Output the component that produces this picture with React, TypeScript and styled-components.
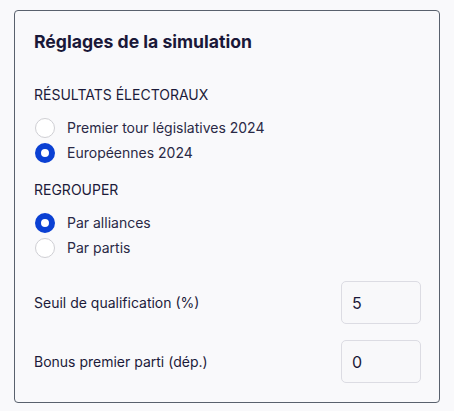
import React, { useState } from "react";
import styled, { createGlobalStyle } from "styled-components";

const Global = createGlobalStyle`
  html, body { margin: 0; padding: 0; background: #f9f9fb; }
  body { font-family: Inter, "Noto Sans", sans-serif; color: #1c1b3a; }
  * { box-sizing: border-box; }
`;

const Page = styled.div`
  padding: 10px 14px;
`;

const Card = styled.section`
  width: 426px;
  border: 1px solid #59616d;
  border-radius: 4px;
  background: #f9f9fb;
  padding: 19px 18px 19px 19px;
  display: flex;
  flex-direction: column;
`;

const Title = styled.h2`
  margin: 0;
  font-size: 17.6px;
  line-height: 24px;
  font-weight: 700;
  color: #1a1838;
`;

const SectionLabel = styled.div<{ $top: number }>`
  margin-top: ${(p) => p.$top}px;
  font-size: 14px;
  line-height: 20px;
  text-transform: uppercase;
  color: #1c1b3a;
`;

const RadioGroup = styled.div`
  margin-top: 10px;
  display: flex;
  flex-direction: column;
`;

const RadioRow = styled.label`
  height: 25px;
  display: flex;
  align-items: center;
  gap: 12px;
  padding-left: 1px;
  font-size: 14px;
  color: #2a2946;
  cursor: pointer;
`;

const RadioDot = styled.span<{ $checked: boolean }>`
  width: 20px;
  height: 20px;
  border-radius: 50%;
  background: #ffffff;
  border: ${(p) => (p.$checked ? "6px solid #0b40d3" : "1px solid #cfcfd4")};
  flex-shrink: 0;
`;

const Field = styled.div<{ $top: number }>`
  margin-top: ${(p) => p.$top}px;
  display: flex;
  align-items: center;
  justify-content: space-between;
  height: 43px;
`;

const FieldLabel = styled.span`
  font-size: 14px;
  color: #1c1b3a;
`;

const NumberBox = styled.input`
  width: 80px;
  height: 43px;
  border: 1px solid #dcdce3;
  border-radius: 5px;
  background: #f8f8fa;
  padding: 0 10px;
  font-family: Inter, "Noto Sans", sans-serif;
  font-size: 16px;
  color: #1a1838;
  outline: none;
`;

type Opt = { value: string; label: string };

function Radios({ options, value, onChange }: { options: Opt[]; value: string; onChange: (v: string) => void }) {
  return (
    <RadioGroup>
      {options.map((o) => (
        <RadioRow key={o.value} onClick={() => onChange(o.value)}>
          <RadioDot $checked={o.value === value} />
          {o.label}
        </RadioRow>
      ))}
    </RadioGroup>
  );
}

export default function App() {
  const [src, setSrc] = useState("euro");
  const [grp, setGrp] = useState("alliances");
  const [seuil, setSeuil] = useState("5");
  const [bonus, setBonus] = useState("0");
  return (
    <Page>
      <Global />
      <Card>
        <Title>Réglages de la simulation</Title>
        <SectionLabel $top={31}>Résultats électoraux</SectionLabel>
        <Radios
          value={src}
          onChange={setSrc}
          options={[
            { value: "leg", label: "Premier tour législatives 2024" },
            { value: "euro", label: "Européennes 2024" },
          ]}
        />
        <SectionLabel $top={15}>Regrouper</SectionLabel>
        <Radios
          value={grp}
          onChange={setGrp}
          options={[
            { value: "alliances", label: "Par alliances" },
            { value: "partis", label: "Par partis" },
          ]}
        />
        <Field $top={21}>
          <FieldLabel>Seuil de qualification (%)</FieldLabel>
          <NumberBox value={seuil} onChange={(e) => setSeuil(e.target.value)} />
        </Field>
        <Field $top={16}>
          <FieldLabel>Bonus premier parti (dép.)</FieldLabel>
          <NumberBox value={bonus} onChange={(e) => setBonus(e.target.value)} />
        </Field>
      </Card>
    </Page>
  );
}
